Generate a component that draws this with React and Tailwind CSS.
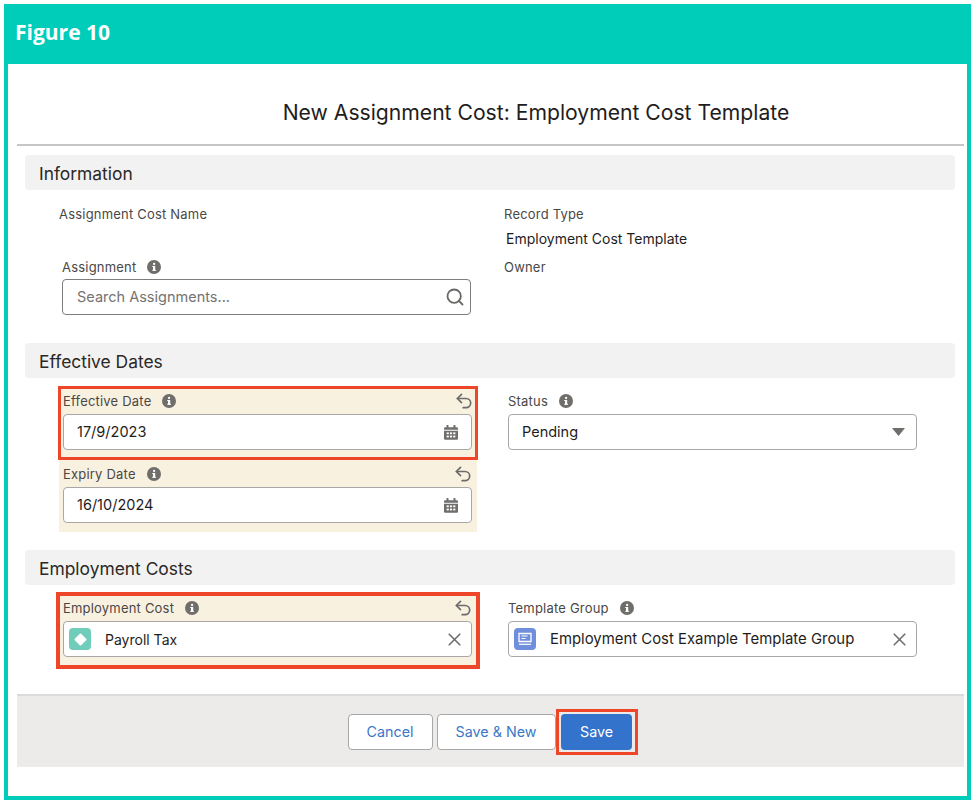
import React from "react";
import { Undo2, Search, X } from "lucide-react";

const Info = () => (
  <svg width="14" height="14" viewBox="0 0 14 14" className="shrink-0">
    <circle cx="7" cy="7" r="7" fill="#706e6b" />
    <rect x="6" y="6" width="2.2" height="4.6" fill="#fff" />
    <rect x="5.2" y="6" width="1.4" height="1" fill="#fff" />
    <rect x="5.2" y="9.8" width="3.8" height="1" fill="#fff" />
    <circle cx="7.1" cy="4" r="1.15" fill="#fff" />
  </svg>
);

const Calendar = () => (
  <svg width="14" height="15" viewBox="0 0 14 15" className="shrink-0">
    <rect x="2.5" y="0" width="2" height="3" rx="0.6" fill="#706e6b" />
    <rect x="9.5" y="0" width="2" height="3" rx="0.6" fill="#706e6b" />
    <path d="M0 3.4a1.2 1.2 0 0 1 1.2-1.2h11.6A1.2 1.2 0 0 1 14 3.4v1.3H0z" fill="#706e6b" />
    <path d="M0 5.8h14v7.8a1.2 1.2 0 0 1-1.2 1.2H1.200a1.2 1.2 0 0 1-1.200-1.200z" fill="#706e6b" />
    <g fill="#fff">
      <rect x="2.600" y="7.400" width="2.200" height="1.800" />
      <rect x="5.900" y="7.400" width="2.200" height="1.800" />
      <rect x="9.200" y="7.400" width="2.200" height="1.800" />
      <rect x="2.600" y="10.600" width="2.200" height="1.800" />
      <rect x="5.900" y="10.600" width="2.200" height="1.800" />
      <rect x="9.200" y="10.600" width="2.200" height="1.800" />
    </g>
  </svg>
);

const SectionBar = ({ children, className = "" }) => (
  <div className={`h-[35px] ml-2 mr-[9px] rounded bg-[#f2f2f2] flex items-center pl-[14px] pt-[3px] text-[17.400px] text-[#2b2826] ${className}`}>
    {children}
  </div>
);

const FieldLabel = ({ text, undo }) => (
  <div className="h-[19px] flex items-center gap-[11px] text-[13px] text-[#4a4846] tracking-[0.2px]">
    <span className="pt-[2px]">{text}</span>
    <Info />
    {undo && <Undo2 size={20} strokeWidth={2} className="ml-auto -mr-px text-[#6b6b6b]" />}
  </div>
);

const Box = ({ children }) => (
  <div className="h-[36px] w-full rounded border border-[#a9a7a5] bg-white flex items-center text-[14.500px] text-[#1f1d1c]">
    {children}
  </div>
);

const DateBox = ({ value }) => (
  <Box>
    <span className="pl-[13px]">{value}</span>
    <span className="ml-auto mr-[13px]"><Calendar /></span>
  </Box>
);

const Pill = ({ bg, children, label, textClass }) => (
  <Box>
    <span className={`ml-[5px] w-[22px] h-[22px] rounded-[4px] flex items-center justify-center shrink-0 ${bg}`}>{children}</span>
    <span className={`ml-[14px] whitespace-nowrap ${textClass}`}>{label}</span>
    <X size={21} strokeWidth={1.9} className="ml-auto mr-[6px] text-[#6f6d6b]" />
  </Box>
);

export default function App() {
  return (
    <div className="w-[976px] h-[802px] p-1 bg-white font-['Inter',sans-serif] overflow-hidden">
      <div className="w-[967px] h-[796px] border-x-4 border-b-4 border-[#00cdb9] bg-white flex flex-col -mr-px">
        <div className="h-[60px] -mx-1 shrink-0 bg-[#00cdb9] flex items-center pl-[11px] pb-[3px] text-white text-[21px] font-bold font-['Open_Sans',sans-serif]">
          Figure 10
        </div>

        <div className="mx-[9px] w-[947px] flex flex-col">
          <div className="h-[82px] border-b-2 border-[#c6c6c6] flex items-center justify-center pl-[91px] pt-[18px] text-[21.150px] text-[#1f1d1c] whitespace-nowrap">
            New Assignment Cost: Employment Cost Template
          </div>

          <SectionBar className="mt-[9px]">Information</SectionBar>

          <div className="h-[153px] grid grid-cols-[487px_1fr]">
            <div className="flex flex-col">
              <div className="pl-[42px] pt-[15px] h-[67px] text-[13px] text-[#4a4846] tracking-[0.2px]">Assignment Cost Name</div>
              <div className="pl-[45px] pr-[16px]">
                <FieldLabel text="Assignment" />
                <div className="mt-[3px] h-[36px] w-[409px] rounded border border-[#7f7d7b] flex items-center text-[14.500px] text-[#75736f]">
                  <span className="pl-[14px]">Search Assignments...</span>
                  <Search size={20} strokeWidth={2.200} className="ml-auto mr-[5px] text-[#6a6866]" />
                </div>
              </div>
            </div>
            <div className="flex flex-col pt-[15px]">
              <div className="text-[13px] text-[#4a4846] tracking-[0.2px]">Record Type</div>
              <div className="mt-[3px] pl-[2px] text-[14px] text-[#1f1d1c]">Employment Cost Template</div>
              <div className="mt-[9px] text-[13px] text-[#4a4846] tracking-[0.2px]">Owner</div>
            </div>
          </div>

          <SectionBar>Effective Dates</SectionBar>

          <div className="h-[172px] pt-2 grid grid-cols-[491px_1fr]">
            <div className="flex flex-col items-start">
              <div className="ml-[41px] w-[420px] h-[74px] border-[3px] border-[#ee4628] bg-[#f9f1e0] px-[2px] pt-[2px]">
                <FieldLabel text="Effective Date" undo />
                <div className="mt-[4px] w-[409px]"><DateBox value="17/9/2023" /></div>
              </div>
              <div className="ml-[42px] w-[418px] h-[72px] bg-[#f9f1e0] pl-[4px] pr-[5px] pt-[4px]">
                <FieldLabel text="Expiry Date" undo />
                <div className="mt-[4px] w-[409px]"><DateBox value="16/10/2024" /></div>
              </div>
            </div>
            <div className="pt-[5px] w-[409px]">
              <FieldLabel text="Status" />
              <div className="mt-[4px]">
                <Box>
                  <span className="pl-[13px]">Pending</span>
                  <svg width="13" height="8" viewBox="0 0 13 8" className="ml-auto mr-[11px]"><path d="M0 0h13L6.500 8z" fill="#706e6b" /></svg>
                </Box>
              </div>
            </div>
          </div>

          <SectionBar>Employment Costs</SectionBar>

          <div className="h-[109px] pt-[7px] grid grid-cols-[491px_1fr]">
            <div>
              <div className="ml-[39px] w-[424px] h-[77px] border-[4px] border-[#ee4628] bg-[#f9f1e0] pl-[3px] pr-[4px] pt-[2px]">
                <FieldLabel text="Employment Cost" undo />
                <div className="mt-[4px] w-[409px]">
                  <Pill
                    label="Payroll Tax"
                    textClass="text-[14px]"
                    bg="bg-[#6fcdb9]"
                    children={<span className="w-[9px] h-[9px] bg-white rotate-45 rounded-[1px]" />}
                  />
                </div>
              </div>
            </div>
            <div className="pt-[6px] w-[409px]">
              <FieldLabel text="Template Group" />
              <div className="mt-[4px]">
                <Pill
                  label="Employment Cost Example Template Group"
                  textClass="text-[14.900px]"
                  bg="bg-[#6f8fdc]"
                  children={
                    <svg width="14" height="14" viewBox="0 0 14 14">
                      <path d="M1 1.500h12v8H1z" fill="none" stroke="#fff" strokeWidth="1.300" />
                      <path d="M3.500 4h6M3.500 6.500h4" stroke="#fff" strokeWidth="1.200" />
                      <path d="M1 12.300h12" stroke="#fff" strokeWidth="1.200" />
                    </svg>
                  }
                />
              </div>
            </div>
          </div>

          <div className="h-[73px] bg-[#ecebea] border-t-2 border-[#dddbda] flex items-center justify-center pl-[4px]">
            <button className="w-[85px] h-[36px] rounded border border-[#a9a7a5] bg-white text-[#3c78c8] text-[14.300px]">Cancel</button>
            <button className="ml-[4px] w-[119px] h-[36px] rounded border border-[#a9a7a5] bg-white text-[#3c78c8] text-[14.300px]">Save &amp; New</button>
            <div className="w-[82px] h-[46px] border-[3px] border-[#ee4628] flex items-center justify-center">
              <button className="w-[71px] h-[36px] rounded bg-[#3373cb] text-white text-[14.300px]">Save</button>
            </div>
          </div>
        </div>
      </div>
    </div>
  );
}
